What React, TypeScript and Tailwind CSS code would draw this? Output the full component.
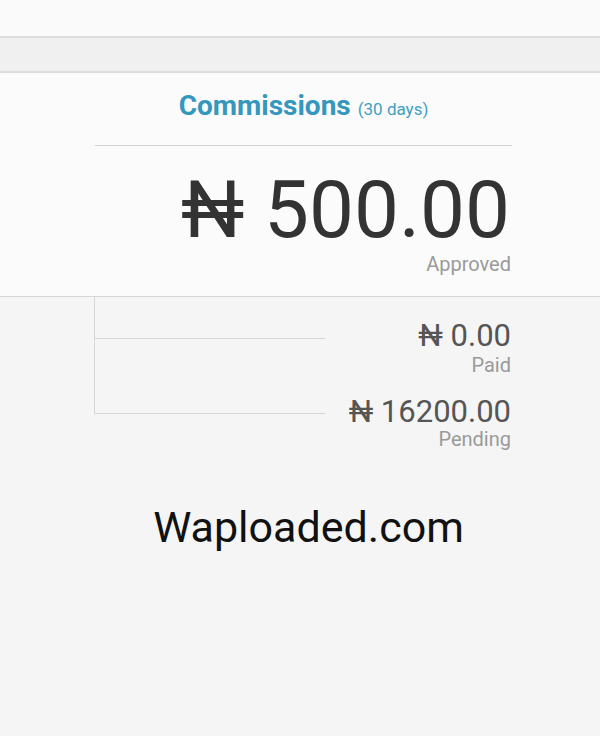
export default function App() {
  return (
    <div className="min-h-[736px] bg-[#f5f5f5] font-['Roboto',sans-serif]">
      <div className="h-[38px] bg-[#fafafa] border-b-2 border-[#dcdcdc]" />
      <div className="h-[35px] bg-[#f0f0f0] border-b-2 border-[#dcdcdc]" />

      {/* commissions card */}
      <div className="bg-[#fbfbfb] border-b border-[#d6d6d6] pt-[19px] pb-[22px]">
        <div className="ml-[95px] w-[417px]">
          <div className="text-center leading-none">
            <span className="text-[28px] font-bold text-[#3497bd]">Commissions</span>
            <span className="ml-[7px] text-[17px] text-[#3f9fc2]">(30 days)</span>
          </div>
          <div className="mt-[25px] border-t border-[#d4d4d4]" />
          <div className="mt-[24px] pr-[2px] text-right text-[80px] leading-none text-[#333333]">
            ₦ 500.00
          </div>
          <div className="mt-[4px] pr-[1px] text-right text-[20px] leading-none text-[#9a9a9a]">
            Approved
          </div>
        </div>
      </div>

      {/* paid / pending */}
      <div className="ml-[94px] w-[417px] flex items-start">
        <div className="w-[231px] border-l border-[#d6d6d6]">
          <div className="h-[42px] border-b border-[#d6d6d6]" />
          <div className="h-[75px] border-b border-[#d6d6d6]" />
        </div>
        <div className="flex-1 text-right">
          <div className="mt-[23px] text-[31px] leading-none text-[#555555]">₦ 0.00</div>
          <div className="mt-[4px] text-[20px] leading-none text-[#9a9a9a]">Paid</div>
          <div className="mt-[21px] text-[31px] leading-none text-[#555555]">₦ 16200.00</div>
          <div className="mt-[2px] text-[20px] leading-none text-[#9a9a9a]">Pending</div>
        </div>
      </div>

      <div className="mt-[57px] pl-[17px] text-center text-[43px] leading-none text-[#111111]">
        Waploaded.com
      </div>
    </div>
  );
}
